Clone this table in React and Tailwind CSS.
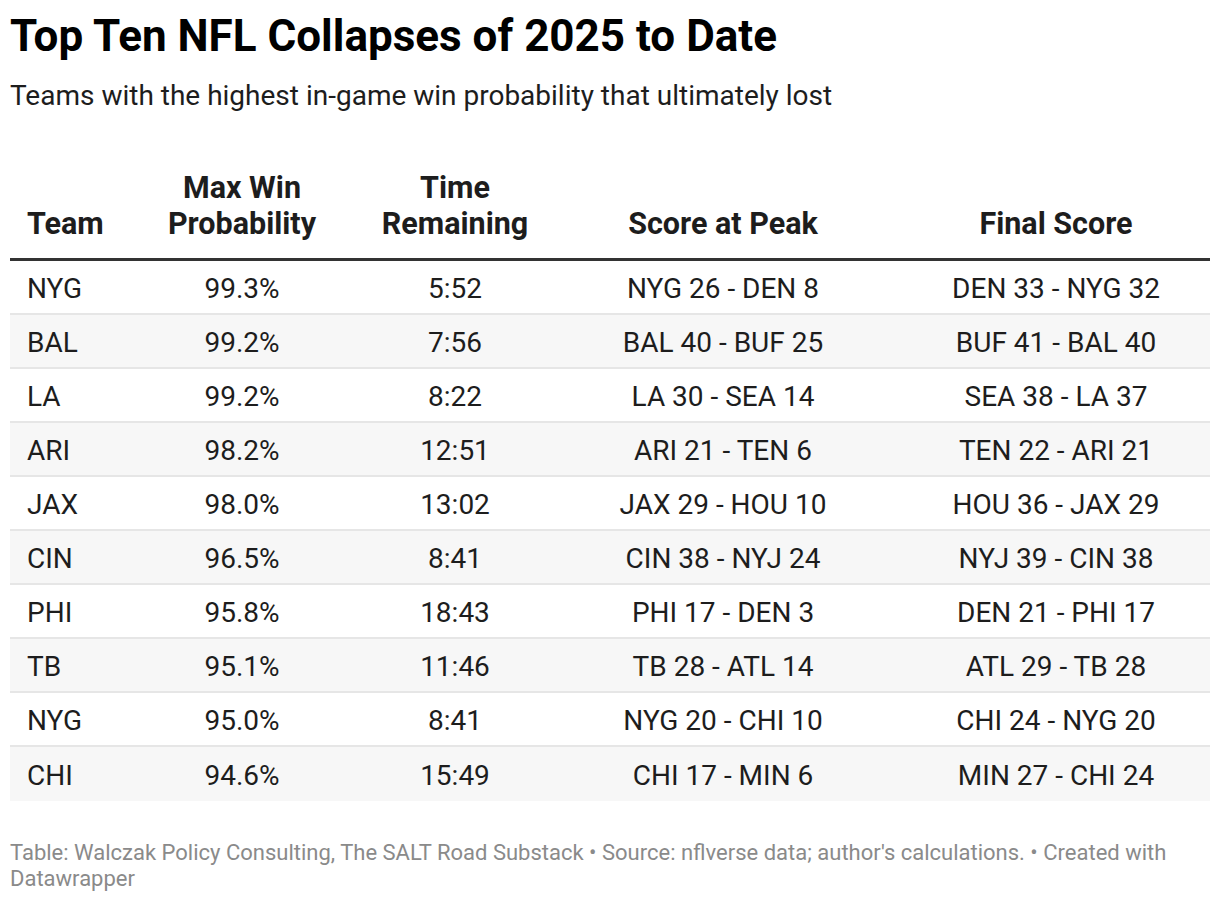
import React from "react";

const rows = [
  ["NYG", "99.3%", "5:52", "NYG 26 - DEN 8", "DEN 33 - NYG 32"],
  ["BAL", "99.2%", "7:56", "BAL 40 - BUF 25", "BUF 41 - BAL 40"],
  ["LA", "99.2%", "8:22", "LA 30 - SEA 14", "SEA 38 - LA 37"],
  ["ARI", "98.2%", "12:51", "ARI 21 - TEN 6", "TEN 22 - ARI 21"],
  ["JAX", "98.0%", "13:02", "JAX 29 - HOU 10", "HOU 36 - JAX 29"],
  ["CIN", "96.5%", "8:41", "CIN 38 - NYJ 24", "NYJ 39 - CIN 38"],
  ["PHI", "95.8%", "18:43", "PHI 17 - DEN 3", "DEN 21 - PHI 17"],
  ["TB", "95.1%", "11:46", "TB 28 - ATL 14", "ATL 29 - TB 28"],
  ["NYG", "95.0%", "8:41", "NYG 20 - CHI 10", "CHI 24 - NYG 20"],
  ["CHI", "94.6%", "15:49", "CHI 17 - MIN 6", "MIN 27 - CHI 24"],
];

const grid = "grid grid-cols-[108px_248px_178px_358px_308px]";

export default function App() {
  return (
    <div
      className="bg-white w-[1220px] h-[902px] px-[10px] pt-[12px] text-[#1d1d1d]"
      style={{ fontFamily: "Roboto, 'Liberation Sans', sans-serif" }}
    >
      <h1 className="text-[44px] leading-[48px] font-bold text-[#000]">
        Top Ten NFL Collapses of 2025 to Date
      </h1>
      <p className="mt-[20px] text-[28px] leading-[32px] text-[#1d1d1d]">
        Teams with the highest in-game win probability that ultimately lost
      </p>

      <div className="mt-[58px]">
        <div className={`${grid} items-end border-b-[3px] border-[#333] pb-[16px] text-[30.5px] leading-[36px] font-bold text-[#1d1d1d]`}>
          <div className="pl-[17px]">Team</div>
          <div className="text-center">Max Win<br />Probability</div>
          <div className="text-center">Time<br />Remaining</div>
          <div className="text-center">Score at Peak</div>
          <div className="text-center">Final Score</div>
        </div>
        {rows.map((r, i) => (
          <div
            key={i}
            className={`${grid} h-[54px] pt-[4px] items-center text-[28px] ${
              i % 2 === 1 ? "bg-[#f7f7f7]" : "bg-white"
            } ${i < rows.length - 1 ? "border-b-2 border-[#e6e6e6]" : ""}`}
          >
            <div className="pl-[17px]">{r[0]}</div>
            <div className="text-center">{r[1]}</div>
            <div className="text-center">{r[2]}</div>
            <div className="text-center">{r[3]}</div>
            <div className="text-center">{r[4]}</div>
          </div>
        ))}
      </div>

      <p className="mt-[39px] text-[22px] leading-[26px] text-[#8a8a8a]">
        Table: Walczak Policy Consulting, The SALT Road Substack • Source: nflverse data; author's calculations. • Created with Datawrapper
      </p>
    </div>
  );
}
